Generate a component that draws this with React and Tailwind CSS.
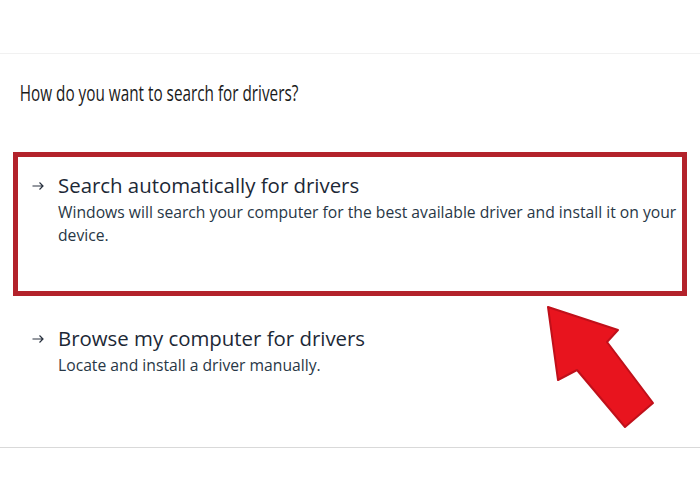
const Arrow = () => (
  <svg width="12" height="10" viewBox="0 0 12 10" fill="none" stroke="#2a3340" strokeWidth="1.2">
    <path d="M0.5 5H11M7.5 1.5L11 5L7.5 8.5" />
  </svg>
);

const Option = ({ title, children }) => (
  <div className="flex items-start">
    <span className="flex w-[26px] shrink-0 pt-[9px]">
      <Arrow />
    </span>
    <div className="flex-1">
      <div className="text-[20.4px] leading-[26px] text-[#1c2836]">{title}</div>
      <div className="mt-[3px] text-[15.7px] leading-[23px] text-[#283746]">{children}</div>
    </div>
  </div>
);

export default function App() {
  return (
    <div
      className="relative h-[500px] w-[700px] overflow-hidden bg-white"
      style={{ fontFamily: '"Open Sans", "Noto Sans", sans-serif' }}
    >
      <div className="h-[54px] border-b border-[#f1f1f1]" />

      <h2 className="origin-left scale-x-[0.68] whitespace-nowrap pl-[29px] pt-[24px] text-[22.5px] leading-[30px] text-[#1a1a1a]">
        How do you want to search for drivers?
      </h2>

      <div className="mx-[13px] mt-[44px] h-[144px] border-[5px] border-[#b3222b] pl-[14px] pt-[15px]">
        <Option title="Search automatically for drivers">
          Windows will search your computer for the best available driver and install it on your device.
        </Option>
      </div>

      <div className="mt-[29px] pl-[32px]">
        <Option title="Browse my computer for drivers">Locate and install a driver manually.</Option>
      </div>

      <div className="mt-[70px] border-t border-[#d9d9d9]" />

      <svg className="absolute left-0 top-0" width="700" height="500" viewBox="0 0 700 500">
        <polygon
          points="548,307 618,330 607,342 653,403 625,427 577,370 558,380"
          fill="#e8141e"
          stroke="#c0101a"
          strokeWidth="2"
          strokeLinejoin="round"
        />
      </svg>
    </div>
  );
}
